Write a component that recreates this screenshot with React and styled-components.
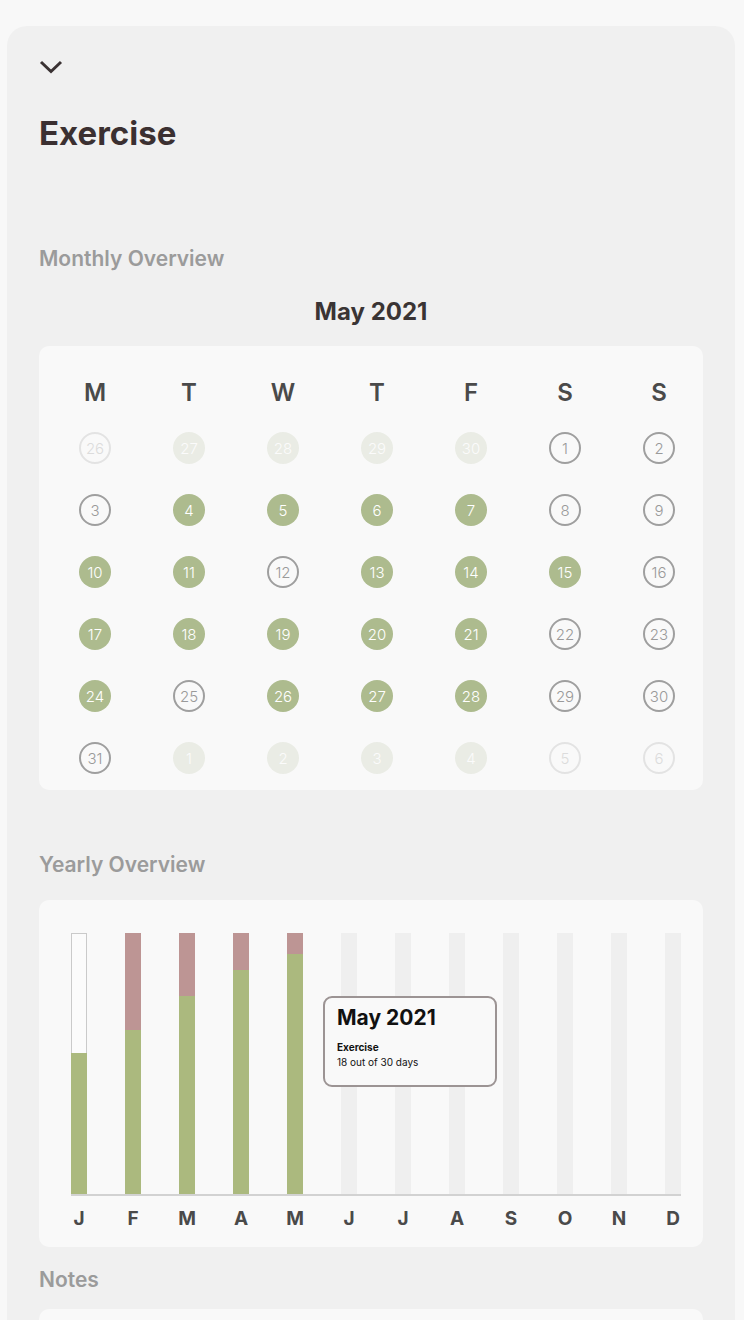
import React from 'react'
import styled, { createGlobalStyle, css } from 'styled-components'

const GlobalStyle = createGlobalStyle`
   body {
      margin: 0;
      background: #f8f8f8;
      font-family: Inter, "Noto Sans", sans-serif;
   }
`

const WEEKDAYS = ['M', 'T', 'W', 'T', 'F', 'S', 'S']

// d = done, m = missed, fd / fm = days outside of the month
const DAYS = [
   [26, 'fm'], [27, 'fd'], [28, 'fd'], [29, 'fd'], [30, 'fd'], [1, 'm'], [2, 'm'],
   [3, 'm'], [4, 'd'], [5, 'd'], [6, 'd'], [7, 'd'], [8, 'm'], [9, 'm'],
   [10, 'd'], [11, 'd'], [12, 'm'], [13, 'd'], [14, 'd'], [15, 'd'], [16, 'm'],
   [17, 'd'], [18, 'd'], [19, 'd'], [20, 'd'], [21, 'd'], [22, 'm'], [23, 'm'],
   [24, 'd'], [25, 'm'], [26, 'd'], [27, 'd'], [28, 'd'], [29, 'm'], [30, 'm'],
   [31, 'm'], [1, 'fd'], [2, 'fd'], [3, 'fd'], [4, 'fd'], [5, 'fm'], [6, 'fm'],
]

// share of the bar that is green, null = future month
const MONTHS = [
   { label: 'J', done: 0.54, empty: true },
   { label: 'F', done: 0.628 },
   { label: 'M', done: 0.759 },
   { label: 'A', done: 0.858 },
   { label: 'M', done: 0.92 },
   { label: 'J', done: null },
   { label: 'J', done: null },
   { label: 'A', done: null },
   { label: 'S', done: null },
   { label: 'O', done: null },
   { label: 'N', done: null },
   { label: 'D', done: null },
]

export default function App() {
   return (
      <Page>
         <GlobalStyle />
         <Card>
            <Collapse aria-label="collapse">
               <svg width="24" height="14" viewBox="0 0 24 14">
                  <polyline
                     points="2,2 12,11.5 22,2"
                     fill="none"
                     stroke="#3a3233"
                     strokeWidth="3"
                  />
               </svg>
            </Collapse>
            <Title>Exercise</Title>

            <SectionLabel top={98}>Monthly Overview</SectionLabel>
            <MonthTitle>May 2021</MonthTitle>
            <CalendarPanel>
               <WeekRow>
                  {WEEKDAYS.map((w, i) => (
                     <Weekday key={i}>{w}</Weekday>
                  ))}
               </WeekRow>
               <DaysGrid>
                  {DAYS.map(([n, kind], i) => (
                     <DayCell key={i}>
                        <Day kind={kind}>{n}</Day>
                     </DayCell>
                  ))}
               </DaysGrid>
            </CalendarPanel>

            <SectionLabel top={64}>Yearly Overview</SectionLabel>
            <ChartPanel>
               <Bars>
                  {MONTHS.map((m, i) => (
                     <Bar key={i} future={m.done === null}>
                        {m.done !== null && (
                           <>
                              <Missed empty={m.empty} />
                              <Done style={{ height: `${m.done * 100}%` }} />
                           </>
                        )}
                     </Bar>
                  ))}
               </Bars>
               <Labels>
                  {MONTHS.map((m, i) => (
                     <MonthLabel key={i}>{m.label}</MonthLabel>
                  ))}
               </Labels>
               <Tooltip>
                  <TooltipTitle>May 2021</TooltipTitle>
                  <TooltipName>Exercise</TooltipName>
                  <TooltipText>18 out of 30 days</TooltipText>
               </Tooltip>
            </ChartPanel>

            <SectionLabel top={22}>Notes</SectionLabel>
            <NotesPanel />
         </Card>
      </Page>
   )
}

const Page = styled.div`
   padding: 26px 9px 0 7px;
`

const Card = styled.section`
   background: #f0f0f0;
   border-radius: 20px 20px 0 0;
   padding: 34px 32px 0;
   min-height: 1400px;
   box-sizing: border-box;
`

const Collapse = styled.button`
   display: block;
   border: none;
   background: transparent;
   padding: 0;
   height: 14px;
   cursor: pointer;
   svg {
      display: block;
   }
`

const Title = styled.h1`
   margin: 43px 0 0;
   font-size: 33px;
   line-height: 33px;
   font-weight: 700;
   color: #3b3031;
`

const SectionLabel = styled.h2`
   margin: ${p => p.top}px 0 0;
   font-size: 21px;
   line-height: 22px;
   font-weight: 600;
   color: #9b9b9b;
`

const MonthTitle = styled.h3`
   margin: 30px 0 0;
   text-align: center;
   font-size: 24px;
   line-height: 24px;
   font-weight: 700;
   color: #3a3434;
`

const panel = css`
   background: #f9f9f9;
   border-radius: 10px;
`

const CalendarPanel = styled.div`
   ${panel};
   margin-top: 22px;
   padding: 30px 0 16px 9px;
`

const sevenColumns = css`
   display: grid;
   grid-template-columns: repeat(7, 94px);
`

const WeekRow = styled.div`
   ${sevenColumns};
   height: 34px;
`

const Weekday = styled.div`
   display: flex;
   align-items: center;
   justify-content: center;
   font-size: 24px;
   line-height: 34px;
   font-weight: 600;
   color: #4a4a4a;
`

const DaysGrid = styled.div`
   ${sevenColumns};
   grid-auto-rows: 32px;
   row-gap: 30px;
   margin-top: 22px;
`

const DayCell = styled.div`
   display: flex;
   justify-content: center;
`

const dayKinds = {
   d: css`
      background: #adbb8e;
      color: #ffffff;
   `,
   m: css`
      border: 2px solid #9f9f9f;
      color: #9a9a9a;
   `,
   fd: css`
      background: #eaece5;
      color: #fbfbfb;
   `,
   fm: css`
      border: 2px solid #e3e3e3;
      color: #dcdcdc;
   `,
}

const Day = styled.div`
   width: 32px;
   height: 32px;
   box-sizing: border-box;
   border-radius: 50%;
   display: flex;
   align-items: center;
   justify-content: center;
   font-size: 15px;
   font-weight: 300;
   ${p => dayKinds[p.kind]};
`

const ChartPanel = styled.div`
   ${panel};
   position: relative;
   margin-top: 24px;
   padding: 33px 0 18px 32px;
`

const Bars = styled.div`
   display: flex;
   gap: 38px;
   width: 610px;
   height: 261px;
   border-bottom: 2px solid #d2d2d2;
`

const Bar = styled.div`
   width: 16px;
   display: flex;
   flex-direction: column;
   background: ${p => (p.future ? '#efefef' : 'transparent')};
`

const Missed = styled.div`
   flex: 1;
   box-sizing: border-box;
   ${p =>
      p.empty
         ? css`
              background: #fbfbfb;
              border: 1px solid #cacaca;
              border-bottom: none;
           `
         : css`
              background: #bd9594;
           `};
`

const Done = styled.div`
   background: #abb97e;
`

const Labels = styled.div`
   display: flex;
   gap: 38px;
   margin-top: 13px;
`

const MonthLabel = styled.div`
   width: 16px;
   display: flex;
   justify-content: center;
   font-size: 19px;
   line-height: 20px;
   font-weight: 700;
   color: #4a4a4a;
`

const Tooltip = styled.div`
   position: absolute;
   left: 284px;
   top: 96px;
   width: 174px;
   height: 91px;
   box-sizing: border-box;
   padding: 7px 12px 0;
   background: #f9f9f9;
   border: 2px solid #9c9494;
   border-radius: 9px;
   color: #111111;
`

const TooltipTitle = styled.div`
   font-size: 21px;
   line-height: 26px;
   font-weight: 700;
`

const TooltipName = styled.div`
   margin-top: 9px;
   font-size: 10px;
   line-height: 14px;
   font-weight: 700;
`

const TooltipText = styled.div`
   margin-top: 1px;
   font-size: 10px;
   line-height: 15px;
   font-weight: 400;
`

const NotesPanel = styled.div`
   ${panel};
   margin-top: 18px;
   height: 160px;
`
